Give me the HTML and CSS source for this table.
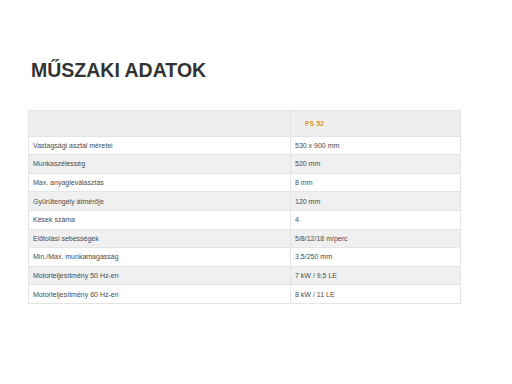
FILE: index.html
```html
<!DOCTYPE html>
<html lang="hu">
<head>
<meta charset="utf-8">
<link rel="stylesheet" href="styles.css">
</head>
<body>
<main class="page">
  <h1 class="title">MŰSZAKI ADATOK</h1>
  <table class="specs">
    <thead>
      <tr><th class="blank"></th><th class="model">PS 52</th></tr>
    </thead>
    <tbody>
      <tr><td>Vastagsági asztal méretei</td><td>530 x 900 mm</td></tr>
      <tr><td>Munkaszélesség</td><td>520 mm</td></tr>
      <tr><td>Max. anyagleválasztás</td><td>8 mm</td></tr>
      <tr><td>Gyűrűtengely átmérője</td><td>120 mm</td></tr>
      <tr><td>Kések száma</td><td>4</td></tr>
      <tr><td>Előtolási sebességek</td><td>5/8/12/18 m/perc</td></tr>
      <tr><td>Min./Max. munkamagasság</td><td>3,5/250 mm</td></tr>
      <tr><td>Motorteljesítmény 50 Hz-en</td><td>7 kW / 9,5 LE</td></tr>
      <tr><td>Motorteljesítmény 60 Hz-en</td><td>8 kW / 11 LE</td></tr>
    </tbody>
  </table>
</main>
</body>
</html>
```
FILE: styles.css
```css
html, body {
  margin: 0;
  padding: 0;
  background: #fff;
}
body {
  font-family: "Liberation Sans", Arial, sans-serif;
  color: #4a4a4a;
}
.page {
  padding: 58px 51px 0 28px;
}
.title {
  margin: 0 0 28px 3px;
  font-size: 19.5px;
  line-height: 24px;
  font-weight: bold;
  color: #333;
}
.specs {
  width: 433px;
  border-collapse: collapse;
  font-size: 7px;
  table-layout: fixed;
}
.specs th, .specs td {
  border: 1px solid #e4e4e4;
  text-align: left;
  padding: 0 4px;
  height: 17.6px;
  font-weight: normal;
}
.specs th:first-child, .specs td:first-child {
  width: 253px;
}
.specs thead th {
  height: 24.6px;
  background: #efefef;
}
.specs .model {
  color: #e0901f;
  font-weight: bold;
  font-size: 6.5px;
  letter-spacing: 0.3px;
  padding-left: 14px;
}
.specs tbody tr:nth-child(even) td {
  background: #f0f0f0;
}
```
